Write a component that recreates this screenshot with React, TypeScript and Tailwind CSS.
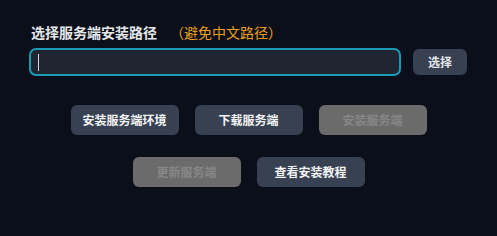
export default function App() {
  const font = { fontFamily: '"Noto Sans CJK SC", "Noto Sans", sans-serif' };

  const buttons = [
    { label: "安装服务端环境", disabled: false },
    { label: "下载服务端", disabled: false },
    { label: "安装服务端", disabled: true },
    { label: "更新服务端", disabled: true },
    { label: "查看安装教程", disabled: false },
  ];

  return (
    <div className="min-h-screen w-full bg-[#0b0f19] px-[29px] pt-[22px]" style={font}>
      <div className="flex h-5 items-center gap-[13px] pl-[2px]">
        <span className="text-sm font-bold text-[#e5e7eb]">选择服务端安装路径</span>
        <span className="text-sm text-[#f0a020]">（避免中文路径）</span>
      </div>

      <div className="mt-[6px] flex items-center gap-3">
        <div className="flex h-[28px] w-[372px] items-center rounded-[7px] border-2 border-[#1b9ab8] bg-[#1f2631] pl-[7px]">
          <span className="h-[17px] w-px bg-[#d1d5db]" />
        </div>
        <button className="h-[26px] w-[54px] rounded-md bg-[#374151] text-xs font-bold text-[#e5e7eb]">
          选择
        </button>
      </div>

      <div className="mx-auto mt-[29px] flex w-[372px] flex-wrap justify-center gap-x-4 gap-y-[22px]">
        {buttons.map((b) => (
          <button
            key={b.label}
            disabled={b.disabled}
            className={
              b.disabled
                ? "h-[30px] w-[108px] rounded-md bg-[#6b6b6b] text-xs font-bold text-[#878787]"
                : "h-[30px] w-[108px] rounded-md bg-[#374151] text-xs font-bold text-[#f3f4f6]"
            }
          >
            {b.label}
          </button>
        ))}
      </div>
    </div>
  );
}
